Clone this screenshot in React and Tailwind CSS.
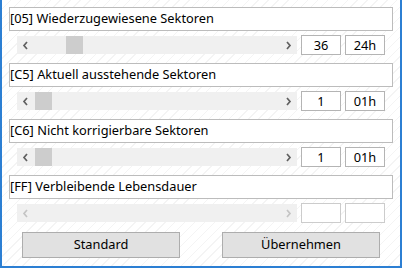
const ROWS = [
  { label: '[05] Wiederzugewiesene Sektoren', value: '36', time: '24h', thumb: 66 },
  { label: '[C5] Aktuell ausstehende Sektoren', value: '1', time: '01h', thumb: 35 },
  { label: '[C6] Nicht korrigierbare Sektoren', value: '1', time: '01h', thumb: 35 },
  { label: '[FF] Verbleibende Lebensdauer', value: '', time: '', thumb: null },
]

function Chevron({ dir, disabled }) {
  const pts = dir === 'left' ? '5,1 2,4.5 5,8' : '2,1 5,4.5 2,8'
  return (
    <svg width="7" height="9" viewBox="0 0 7 9" className="block">
      <polyline
        points={pts}
        fill="none"
        stroke={disabled ? '#c4c4c4' : '#606060'}
        strokeWidth="1.7"
      />
    </svg>
  )
}

function ScrollBar({ thumb }) {
  const disabled = thumb === null
  return (
    <div className="relative flex h-[18px] w-[280px] items-center justify-between bg-[#f0f0f0]">
      <div className="flex h-full w-[17px] items-center justify-center">
        <Chevron dir="left" disabled={disabled} />
      </div>
      {/* Scroll thumb */}
      {!disabled && (
        <div
          className="absolute top-0 h-full w-[17px] bg-[#cdcdcd]"
          style={{ left: thumb - 17 }}
        />
      )}
      <div className="flex h-full w-[17px] items-center justify-center">
        <Chevron dir="right" disabled={disabled} />
      </div>
    </div>
  )
}

function ValueBox({ text, disabled }) {
  return (
    <div
      className={`flex h-[20px] w-[40px] items-center justify-center border bg-white text-[12.8px] leading-none text-black ${
        disabled ? 'border-[#cccccc]' : 'border-[#b4b4b4]'
      }`}
    >
      {text}
    </div>
  )
}

function Row({ row }) {
  const disabled = row.thumb === null
  return (
    <div className="flex flex-col">
      <div className="flex h-[24px] w-[384px] items-center border border-[#bcbcbc] bg-white text-[12.8px] text-black">
        {row.label}
      </div>
      <div className="mt-[4px] flex h-[20px] items-center pl-[8px]">
        <ScrollBar thumb={row.thumb} />
        <div className="ml-[4px]">
          <ValueBox text={row.value} disabled={disabled} />
        </div>
        <div className="ml-[4px]">
          <ValueBox text={row.time} disabled={disabled} />
        </div>
      </div>
    </div>
  )
}

export default function App() {
  return (
    <div className="h-[274px] w-[403px] bg-white font-['Noto_Sans',sans-serif]">
      <div className="flex h-[268px] w-[402px] flex-col border-x-2 border-b-2 border-[#2c7fd3] bg-[repeating-linear-gradient(135deg,#ffffff_0px,#ffffff_6px,#f4f4f4_6px,#f4f4f4_7px)] pl-[7px] pt-[7px]">
        <div className="flex flex-col gap-[8px]">
          {ROWS.map((row) => (
            <Row key={row.label} row={row} />
          ))}
        </div>
        <div className="mt-[9px] flex gap-[42px] pl-[13px]">
          <button className="h-[26px] w-[158px] border border-[#adadad] bg-[#e1e1e1] text-[12.8px] text-black">
            Standard
          </button>
          <button className="h-[26px] w-[158px] border border-[#adadad] bg-[#e1e1e1] text-[12.8px] text-black">
            Übernehmen
          </button>
        </div>
      </div>
    </div>
  )
}
